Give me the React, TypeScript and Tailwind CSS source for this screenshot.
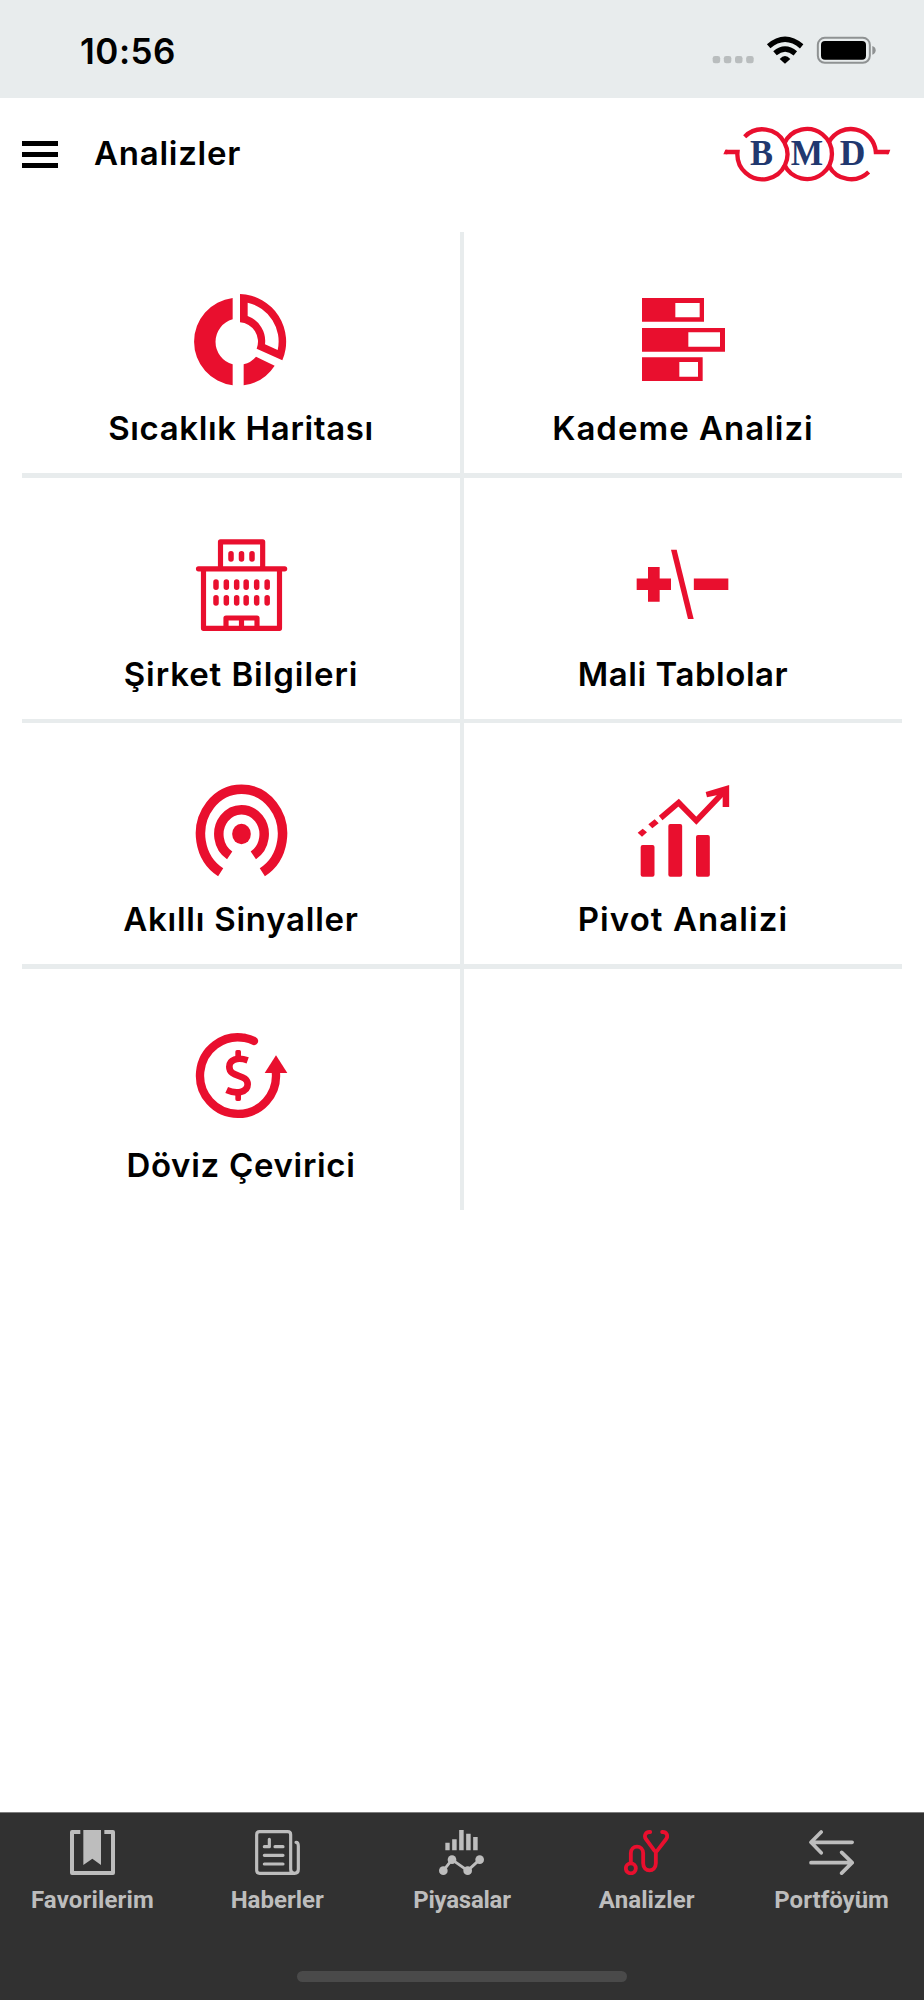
import React from "react";

const RED = "#e90f2e";

function HeatMapIcon() {
  return (
    <svg viewBox="309 36 288 288" className="size-24" fill={RED}>
      <path d="M428 54A132 132 0 0 0 428 316V253A70 70 0 0 1 428 118Z" />
      <path d="M461 253V316A132 132 0 0 0 554 257L498 230A70 70 0 0 1 461 253Z" />
      <path
        fillRule="evenodd"
        d="M450 42A143 143 0 0 1 577 241L500 206A58 58 0 0 0 450 127ZM473 68V108A80 80 0 0 1 525 193L563 210A119 119 0 0 0 473 68Z"
      />
    </svg>
  );
}

function DepthIcon() {
  return (
    <svg viewBox="315 36 288 288" className="size-24" fill={RED}>
      <path fillRule="evenodd" d="M336 54H522V125.500H336ZM436 69V112H509V69Z" />
      <path fillRule="evenodd" d="M336 144H585V215H336ZM475 157V200.500H570V157Z" />
      <path fillRule="evenodd" d="M336 232H518V303H336ZM448 246V290H504V246Z" />
    </svg>
  );
}

function BuildingIcon() {
  return (
    <svg viewBox="309 54 288 288" className="size-24" fill="none" stroke={RED} strokeWidth="15.500" strokeLinecap="round" strokeLinejoin="round">
      <path d="M391.500 146V65.500H518V146M325.500 146.500H584M340.500 147V325H568.500V147" />
      <path d="M408 325V294H501V325M454.500 294V325" />
      <path d="M423 101V117M454.500 101V117M486 101V117" strokeWidth="16.500" />
      <path d="M378 186V202M409 186V202M440 186V202M468.500 186V202M500 186V202M531.500 186V202" strokeWidth="16.500" />
      <path d="M378 233V249M409 233V249M440 233V249M468.500 233V249M500 233V249M531.500 233V249" strokeWidth="16.500" />
    </svg>
  );
}

function PlusMinusIcon() {
  return (
    <svg viewBox="315 54 288 288" className="size-24" fill={RED}>
      <path d="M354 141H389V175.500H423V210H389V245H354V210H320V175.500H354Z" />
      <path d="M423 89.500H440L491 297H474Z" />
      <path d="M491.500 175.500H595V210H491.500Z" />
    </svg>
  );
}

function SignalIcon() {
  return (
    <svg viewBox="309 39 288 288" className="size-24" fill="none" stroke={RED} strokeWidth="28.500">
      <path d="M392 307A123 134 0 1 1 517 307" />
      <path d="M419 256A68 74 0 1 1 490 256" />
      <ellipse cx="454.500" cy="192" rx="28" ry="30.500" fill={RED} stroke="none" />
    </svg>
  );
}

function PivotIcon() {
  return (
    <svg viewBox="315 39 288 288" className="size-24" fill={RED}>
      <rect x="332" y="225" width="41.500" height="95.500" rx="6" />
      <rect x="415" y="162" width="41.500" height="158.500" rx="6" />
      <rect x="498" y="195" width="41.500" height="125.500" rx="6" />
      <path d="M392 144L446 98L499 152L587 60" fill="none" stroke={RED} strokeWidth="17" />
      <path d="M527 66L597.500 45V111H578V72L531 82Z" />
      <path d="M323 188L338 176L351 187L336 200ZM355 163L374 148L386 160L367 175Z" />
    </svg>
  );
}

function CurrencyIcon() {
  return (
    <svg viewBox="309 57 288 288" className="size-24" fill="none" stroke={RED}>
      <path d="M466 84A114 115 0 1 0 557.500 186" strokeWidth="25" />
      <path d="M464 83.500Q480 86 492 93" strokeWidth="25" strokeLinecap="round" />
      <path d="M524 189L558 136L592 189Z" fill={RED} stroke="none" />
      <path d="M436 143V125Q436 120 441 120H448Q453 120 453 125V143ZM436 251V268Q436 273 441 273H448Q453 273 453 268V251Z" fill={RED} stroke="none" />
      <path d="M473 151C441 140 418 150 418 170C418 205 473 190 473 223C473 249 437 252 410 240" strokeWidth="20" />
    </svg>
  );
}

function FavoritesIcon() {
  return (
    <svg viewBox="210 90 135 135" className="size-[45px]" fill="none" stroke="#bdbdbd" strokeWidth="12" strokeLinejoin="round">
      <path d="M241 96H216V219H339V96H313" />
      <path d="M250 90H303V195L277 176L250 195Z" fill="#bdbdbd" stroke="none" />
    </svg>
  );
}

function NewsIcon() {
  return (
    <svg viewBox="763 90 135 135" className="size-[45px]" fill="none" stroke="#bdbdbd" strokeWidth="9.500" strokeLinecap="round" strokeLinejoin="round">
      <path d="M882 220H777Q768 220 768 211V104Q768 95 777 95H861Q870 95 870 104V208Q870 220 882 220Q893 220 893 208V138Q893 127 886 127" />
      <path d="M791 140H806V118M823 140H847M791 166H847M791 192H847" />
    </svg>
  );
}

function MarketsIcon() {
  return (
    <svg viewBox="209 90 135 135" className="size-[45px]" fill="#bdbdbd">
      <path d="M228 128H241V150.500H228ZM248.500 118H262V150.500H248.500ZM269.500 90H283V150.500H269.500ZM290.500 101H304V150.500H290.500ZM311.500 111H325V150.500H311.500Z" />
      <path d="M222 212L248 179L295 212L331 179" fill="none" stroke="#bdbdbd" strokeWidth="8.500" />
      <circle cx="222" cy="212" r="13" />
      <circle cx="248" cy="179" r="13" />
      <circle cx="295" cy="212" r="13" />
      <circle cx="331" cy="179" r="13" />
    </svg>
  );
}

function AnalysisIcon() {
  return (
    <svg viewBox="72.500 90 135 135" className="size-[45px]" fill="none" stroke={RED} strokeWidth="11.500" strokeLinecap="round">
      <circle cx="93" cy="205" r="15" />
      <path d="M93 188V160C93 133 130 133 130 160V190C130 218 168 218 168 190V155" />
      <path d="M151 96C137 95 132 107 138 117L163 151Q168 156 173 151L199 117C206 107 200 95 187 96" />
    </svg>
  );
}

function PortfolioIcon() {
  return (
    <svg viewBox="627.500 90 135 135" className="size-[45px]" fill="none" stroke="#bdbdbd" strokeWidth="11" strokeLinecap="round" strokeLinejoin="round">
      <path d="M757 127H634M664 96L633.500 127L664 158.500M633.500 188H756M725.500 157L757 188L725.500 219.500" />
    </svg>
  );
}

function Logo() {
  return (
    <svg viewBox="99 315 504 174" className="h-[58px] w-[168px]" fill="none" stroke={RED} strokeWidth="13">
      <path d="M164 350A75 75 0 1 1 142.500 396H107" />
      <path d="M283 370A75 75 0 1 1 283 434" />
      <path d="M417 366A75 75 0 0 1 557.500 396H594" />
      <path d="M417 438A75 75 0 0 0 536 456" />
      <path d="M106 389.500L100 402.500H112V389.500ZM594 389.500H601L596 402.500H590Z" fill={RED} stroke="none" />
      <g fill="#21386f" stroke="none" className="font-['Liberation_Serif',serif] text-[110px] font-bold">
        <text x="180" y="436" textLength="69" lengthAdjust="spacingAndGlyphs">B</text>
        <text x="302" y="436" textLength="97" lengthAdjust="spacingAndGlyphs">M</text>
        <text x="449" y="436" textLength="77" lengthAdjust="spacingAndGlyphs">D</text>
      </g>
    </svg>
  );
}

function StatusBar() {
  return (
    <div className="flex h-[98px] items-start justify-between bg-[#e8eced] pr-[47px] pl-20">
      <time className="mt-[30px] text-[35px] leading-[42px] font-semibold tracking-[0.5px]">10:56</time>
      <div className="mt-[35px] flex gap-3">
        <svg viewBox="66 45 126 90" className="h-[30px] w-[42px]" fill="#b9bdbe">
          <rect x="68" y="108" width="22.500" height="22" rx="7" />
          <rect x="101.500" y="108" width="22.500" height="22" rx="7" />
          <rect x="135" y="108" width="22.500" height="22" rx="7" />
          <rect x="168.500" y="108" width="22.500" height="22" rx="7" />
        </svg>
        <svg viewBox="228 45 114 90" className="h-[30px] w-[38px]" fill="none" stroke="#000" strokeWidth="16">
          <path d="M236 79Q285 37 335 79" />
          <path d="M255 100Q285 74 316 100" />
          <path d="M269 117Q285 99 301 117L285 131Z" fill="#000" stroke="none" />
        </svg>
        <svg viewBox="378 45 183 90" className="h-[30px] w-[61px]">
          <rect x="383.500" y="53.500" width="156" height="75" rx="21" fill="none" stroke="#8f9293" strokeWidth="6" />
          <rect x="393" y="63" width="135" height="56" rx="12" />
          <path d="M547 78Q557 81 557 91Q557 101 547 104Z" fill="#8f9293" />
        </svg>
      </div>
    </div>
  );
}

function Header() {
  return (
    <header className="flex h-[112px] items-center pr-[33px] pl-[22px]">
      <button aria-label="Menü" className="flex w-9 flex-col gap-1.5">
        <span className="h-[5px] bg-black" />
        <span className="h-[5px] bg-black" />
        <span className="h-[5px] bg-black" />
      </button>
      <h1 className="mb-[3px] ml-[36px] text-[33px] leading-10 font-semibold tracking-[0.75px]">Analizler</h1>
      <div className="ml-auto">
        <Logo />
      </div>
    </header>
  );
}

const cells = [
  { label: "Sıcaklık Haritası", icon: HeatMapIcon, cell: "border-r-4 border-b-[5px]", text: "tracking-[0.63px]" },
  { label: "Kademe Analizi", icon: DepthIcon, cell: "border-b-[5px]", text: "tracking-[1px]" },
  { label: "Şirket Bilgileri", icon: BuildingIcon, cell: "border-r-4 border-b-4", text: "tracking-[0.93px]" },
  { label: "Mali Tablolar", icon: PlusMinusIcon, cell: "border-b-4", text: "tracking-[0.56px]" },
  { label: "Akıllı Sinyaller", icon: SignalIcon, cell: "border-r-4 border-b-[5px]", text: "tracking-[0.75px]" },
  { label: "Pivot Analizi", icon: PivotIcon, cell: "border-b-[5px]", text: "tracking-[1.08px]" },
  { label: "Döviz Çevirici", icon: CurrencyIcon, cell: "border-r-4", text: "tracking-[0.7px]" },
];

const tabs = [
  { label: "Favorilerim", icon: FavoritesIcon, text: "tracking-[0.15px]" },
  { label: "Haberler", icon: NewsIcon, text: "tracking-normal" },
  { label: "Piyasalar", icon: MarketsIcon, text: "tracking-[-0.25px]" },
  { label: "Analizler", icon: AnalysisIcon, text: "tracking-[0.1px]" },
  { label: "Portföyüm", icon: PortfolioIcon, text: "tracking-normal" },
];

export default function App() {
  return (
    <div className="flex h-[2000px] w-[924px] flex-col bg-white font-['Inter',sans-serif] text-black">
      <StatusBar />
      <Header />
      <main className="mt-[22px] grid flex-1 grid-cols-[442px_438px] content-start px-[22px]">
        {cells.map(({ label, icon: Icon, cell, text }) => (
          <section key={label} className={`box-content flex h-[241px] flex-col items-center border-[#e8eced] ${cell} w-[438px]`}>
            <div className="mt-[60px]">
              <Icon />
            </div>
            <h2 className={`mt-5 text-[33px] leading-10 font-semibold whitespace-nowrap ${text}`}>{label}</h2>
          </section>
        ))}
      </main>
      <footer className="flex h-[188px] flex-col border-t border-[#7d7d7d] bg-[#313131]">
        <nav className="grid grid-cols-5 pt-[17px] font-['Roboto',sans-serif] text-[#bdbdbd]">
          {tabs.map(({ label, icon: Icon, text }) => (
            <a key={label} className="flex flex-col items-center">
              <Icon />
              <span className={`mt-[11px] text-2xl leading-7 font-bold ${text}`}>{label}</span>
            </a>
          ))}
        </nav>
        <div className="mt-auto mb-[18px] h-[11px] w-[330px] self-center rounded-full bg-[#4a4a4a]" />
      </footer>
    </div>
  );
}
